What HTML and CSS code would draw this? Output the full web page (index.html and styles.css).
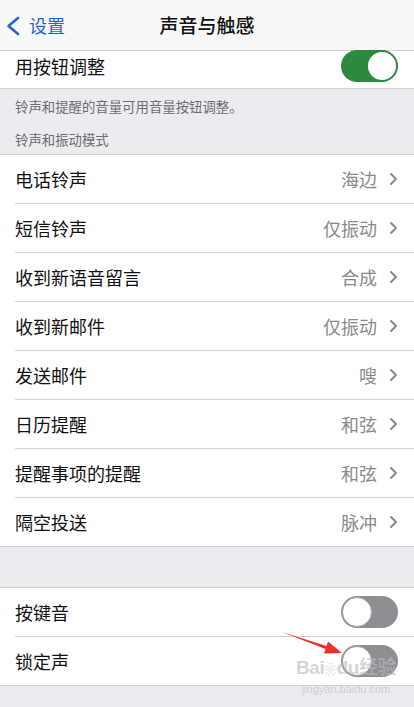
FILE: index.html
```html
<!DOCTYPE html>
<html lang="zh-CN">
<head>
<meta charset="utf-8">
<link rel="stylesheet" href="styles.css">
</head>
<body>
<div class="page">
  <header class="nav">
    <div class="back">
      <svg class="back-chev" width="14" height="20" viewBox="0 0 14 20"><path d="M12 2 L2.5 10 L12 18" fill="none" stroke="#2563d8" stroke-width="2.6" stroke-linecap="round" stroke-linejoin="round"/></svg>
      <span class="back-text">设置</span>
    </div>
    <div class="title">声音与触感</div>
  </header>

  <div class="row row-top">
    <span class="label">用按钮调整</span>
    <span class="toggle on"><span class="knob"></span></span>
  </div>

  <div class="footer-note">铃声和提醒的音量可用音量按钮调整。</div>
  <div class="section-head">铃声和振动模式</div>

  <div class="group">
    <div class="row"><span class="label">电话铃声</span><span class="value">海边</span><svg class="chev" width="9" height="14" viewBox="0 0 9 14"><path d="M2 2 L7 7 L2 12" fill="none" stroke="#8a8a8e" stroke-width="2" stroke-linecap="round" stroke-linejoin="round"/></svg></div>
    <div class="row"><span class="label">短信铃声</span><span class="value">仅振动</span><svg class="chev" width="9" height="14" viewBox="0 0 9 14"><path d="M2 2 L7 7 L2 12" fill="none" stroke="#8a8a8e" stroke-width="2" stroke-linecap="round" stroke-linejoin="round"/></svg></div>
    <div class="row"><span class="label">收到新语音留言</span><span class="value">合成</span><svg class="chev" width="9" height="14" viewBox="0 0 9 14"><path d="M2 2 L7 7 L2 12" fill="none" stroke="#8a8a8e" stroke-width="2" stroke-linecap="round" stroke-linejoin="round"/></svg></div>
    <div class="row"><span class="label">收到新邮件</span><span class="value">仅振动</span><svg class="chev" width="9" height="14" viewBox="0 0 9 14"><path d="M2 2 L7 7 L2 12" fill="none" stroke="#8a8a8e" stroke-width="2" stroke-linecap="round" stroke-linejoin="round"/></svg></div>
    <div class="row"><span class="label">发送邮件</span><span class="value">嗖</span><svg class="chev" width="9" height="14" viewBox="0 0 9 14"><path d="M2 2 L7 7 L2 12" fill="none" stroke="#8a8a8e" stroke-width="2" stroke-linecap="round" stroke-linejoin="round"/></svg></div>
    <div class="row"><span class="label">日历提醒</span><span class="value">和弦</span><svg class="chev" width="9" height="14" viewBox="0 0 9 14"><path d="M2 2 L7 7 L2 12" fill="none" stroke="#8a8a8e" stroke-width="2" stroke-linecap="round" stroke-linejoin="round"/></svg></div>
    <div class="row"><span class="label">提醒事项的提醒</span><span class="value">和弦</span><svg class="chev" width="9" height="14" viewBox="0 0 9 14"><path d="M2 2 L7 7 L2 12" fill="none" stroke="#8a8a8e" stroke-width="2" stroke-linecap="round" stroke-linejoin="round"/></svg></div>
    <div class="row"><span class="label">隔空投送</span><span class="value">脉冲</span><svg class="chev" width="9" height="14" viewBox="0 0 9 14"><path d="M2 2 L7 7 L2 12" fill="none" stroke="#8a8a8e" stroke-width="2" stroke-linecap="round" stroke-linejoin="round"/></svg></div>
  </div>

  <div class="spacer"></div>

  <div class="group">
    <div class="row"><span class="label">按键音</span><span class="toggle off"><span class="knob"></span></span></div>
    <div class="row"><span class="label">锁定声</span><span class="toggle off"><span class="knob"></span></span></div>
  </div>

  <svg class="arrow" width="414" height="707" viewBox="0 0 414 707"><polygon points="282,632 326.5,646 328,641.5 342,653 324,653.5 325.5,649" fill="#f0302a"/></svg>
  <div class="watermark">
    <span class="wm-logo">Bai<span class="paw">❀</span>du经验</span>
    <span class="wm-url">jingyan.baidu.com</span>
  </div>
</div>
</body>
</html>
```

FILE: styles.css
```css
* { box-sizing: border-box; }
html, body { margin: 0; padding: 0; }
body {
  font-family: "Noto Sans CJK SC", "Noto Sans", sans-serif;
  background: #ebebf0;
  color: #111;
}
.page {
  position: relative;
  width: 414px;
  height: 707px;
  overflow: hidden;
  background: #ebebf0;
}
.nav {
  position: relative;
  height: 51px;
  background: #f8f8f8;
  border-bottom: 1px solid #cfcfd2;
  display: flex;
  align-items: center;
  justify-content: center;
  padding-bottom: 1px;
}
.back {
  position: absolute;
  left: 6px;
  top: 0;
  height: 50px;
  display: flex;
  align-items: center;
  gap: 9px;
}
.back-chev { margin-top: 2px; }
.back-text {
  font-size: 18px;
  color: #2563d8;
  line-height: 1;
}
.title {
  font-size: 19px;
  font-weight: 500;
  color: #111;
  line-height: 1;
}
.row {
  position: relative;
  height: 49px;
  display: flex;
  align-items: center;
  padding: 0 16px 0 15px;
  background: #fff;
}
.row + .row::before {
  content: "";
  position: absolute;
  left: 15px;
  right: 0;
  top: 0;
  height: 1px;
  background: #d4d4d7;
}
.row-top {
  height: 38px;
  padding-bottom: 7px;
  border-bottom: 1px solid #d0d0d3;
}
.label {
  font-size: 18px;
  line-height: 1;
  flex: 1;
}
.value {
  font-size: 18px;
  line-height: 1;
  color: #8a8a8e;
  margin-right: 12px;
}
.chev { display: block; }
.footer-note {
  font-size: 13.4px;
  color: #6d6d72;
  padding: 7px 15px 0;
  height: 34px;
  line-height: 20px;
}
.section-head {
  font-size: 13.4px;
  color: #6d6d72;
  padding: 6px 15px 0;
  height: 31px;
  line-height: 20px;
}
.group {
  border-top: 1px solid #d0d0d3;
  border-bottom: 1px solid #d0d0d3;
  background: #fff;
}
.group .row { height: 49px; }
.group .row:first-child { height: 48px; }
.spacer { height: 40px; }
.toggle {
  position: relative;
  width: 57px;
  height: 32px;
  border-radius: 16px;
  display: block;
  flex: none;
}
.toggle.on { background: #2b8a3e; }
.toggle.off { background: #8f8f93; }
.knob {
  position: absolute;
  top: 2px;
  width: 28px;
  height: 28px;
  border-radius: 50%;
  background: #fff;
}
.toggle.on .knob { right: 2px; }
.toggle.off .knob { left: 1px; top: 1px; width: 30px; height: 30px; border: 1px solid #a5a5a8; }
.arrow {
  position: absolute;
  left: 0;
  top: 0;
  pointer-events: none;
}
.watermark {
  position: absolute;
  left: 288px;
  top: 656px;
  width: 116px;
  display: flex;
  flex-direction: column;
  align-items: center;
  color: rgba(185, 185, 190, 0.6);
  font-family: "Liberation Sans", "Noto Sans CJK SC", sans-serif;
  white-space: nowrap;
  pointer-events: none;
}
.wm-logo {
  font-size: 19px;
  font-weight: 700;
  line-height: 24px;
  letter-spacing: -0.5px;
}
.paw { font-size: 13px; }
.wm-url {
  font-size: 11px;
  line-height: 14px;
}
```
